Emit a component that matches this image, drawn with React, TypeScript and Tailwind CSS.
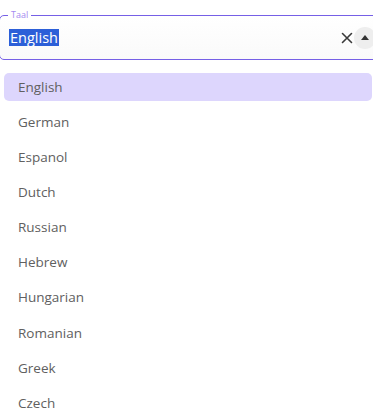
import React from "react";

const languages = [
  "English",
  "German",
  "Espanol",
  "Dutch",
  "Russian",
  "Hebrew",
  "Hungarian",
  "Romanian",
  "Greek",
  "Czech",
];

const App = () => {
  return (
    <div className="w-[373px] h-[416px] overflow-hidden bg-white font-['Open_Sans',sans-serif]">
      <div className="relative mt-[15px] ml-[-1px] w-[382px] h-[45px] border border-[#7660e6] rounded-[5px] bg-gradient-to-b from-white to-[#fafafa] flex items-center pl-[9px]">
        <span className="absolute -top-[7px] left-[8px] bg-white px-[3px] text-[9px] leading-[12px] text-[#a58af0]">
          Taal
        </span>
        <span className="bg-[#2c5fd8] text-white text-[14.5px] leading-[17px] px-px">English</span>
        <div className="ml-auto flex items-center">
          <svg width="12" height="12" viewBox="0 0 12 12" className="mr-px">
            <path d="M1.5 1.5 L10.5 10.5 M10.5 1.5 L1.5 10.5" stroke="#3a3a3a" strokeWidth="1.6" strokeLinecap="round" />
          </svg>
          <div className="w-[22px] h-[22px] rounded-full bg-[#eeeeee] flex items-center justify-center mr-[4px]">
            <svg width="8" height="5" viewBox="0 0 8 5">
              <path d="M0 5 L4 0 L8 5 Z" fill="#333" />
            </svg>
          </div>
        </div>
      </div>
      <ul className="mt-[13px] flex flex-col gap-[7.1px]">
        {languages.map((lang, i) => (
          <li
            key={lang}
            className={
              i === 0
                ? "ml-[4px] mr-px h-[28px] rounded-[5px] bg-[#ddd6fd] pl-[14px] flex items-center text-[13.5px] text-[#606060]"
                : "ml-[4px] mr-px h-[28px] rounded-[5px] pl-[14px] flex items-center text-[13.5px] text-[#606060]"
            }
          >
            {lang}
          </li>
        ))}
      </ul>
    </div>
  );
};

export default App;
